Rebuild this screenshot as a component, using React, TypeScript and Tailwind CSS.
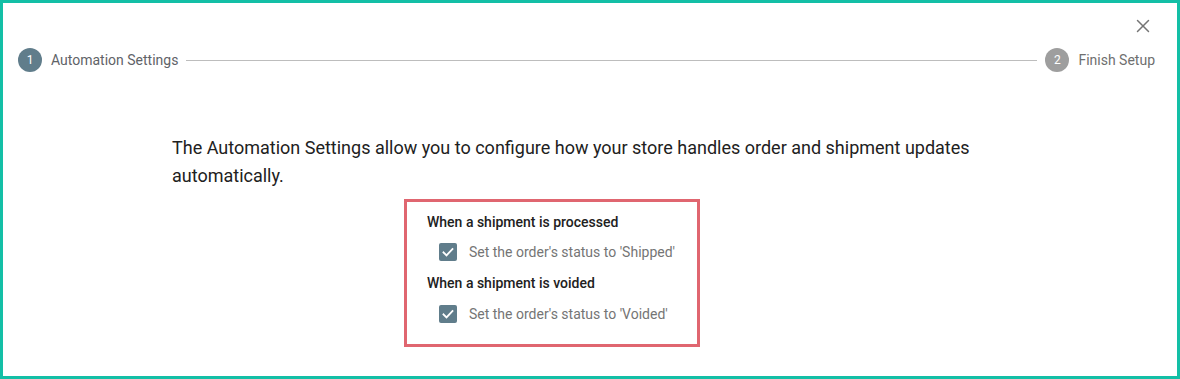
import { X } from "lucide-react";

function Check() {
  return (
    <span className="flex h-[18px] w-[18px] shrink-0 items-center justify-center rounded-[2px] bg-[#607d8b]">
      <svg viewBox="0 0 24 24" className="h-[18px] w-[18px]" fill="none">
        <path d="M6 12.5l4 4 8-8.5" stroke="#fff" strokeWidth="2.4" strokeLinecap="square" />
      </svg>
    </span>
  );
}

function Step({ n, label, active }: { n: number; label: string; active?: boolean }) {
  return (
    <div className="flex shrink-0 items-center gap-[9px]">
      <span
        className={`flex h-6 w-6 items-center justify-center rounded-full text-[12px] text-white ${
          active ? "bg-[#607d8b]" : "bg-[#9e9e9e]"
        }`}
      >
        {n}
      </span>
      <span className={`text-[14px] ${active ? "text-[#5f6368]" : "text-[#6f6f6f]"}`}>{label}</span>
    </div>
  );
}

export default function App() {
  return (
    <div
      className="relative h-[379px] w-full border-[3px] border-[#13bfa6] bg-white"
      style={{ fontFamily: "Roboto, 'Liberation Sans', sans-serif" }}
    >
      <button className="absolute right-[22px] top-[11px] flex h-6 w-6 items-center justify-center text-[#757575]">
        <X className="h-[22px] w-[22px]" strokeWidth={1.6} />
      </button>

      {/* Stepper */}
      <div className="flex items-center pl-[15px] pr-[22px] pt-[45px]">
        <Step n={1} label="Automation Settings" active />
        <div className="mx-2 h-px flex-1 bg-[#bdbdbd]" />
        <Step n={2} label="Finish Setup" />
      </div>

      <div className="mx-auto mt-[62px] w-[836px]">
        <p className="text-[18px] leading-7 text-[#212121]">
          The Automation Settings allow you to configure how your store handles order and shipment updates
          automatically.
        </p>

        <div className="ml-[232px] mt-[9px] w-[296px] border-[3px] border-[#e06670] pb-[18px] pl-5 pt-[10px] text-[14px]">
          <div className="h-5 font-medium leading-5 text-[#212121]">When a shipment is processed</div>
          <div className="mt-2 flex h-6 items-center gap-3 pl-3">
            <Check />
            <span className="text-[#757575]">Set the order's status to 'Shipped'</span>
          </div>
          <div className="mt-[9px] h-5 font-medium leading-5 text-[#212121]">When a shipment is voided</div>
          <div className="mt-[9px] flex h-6 items-center gap-3 pl-3">
            <Check />
            <span className="text-[#757575]">Set the order's status to 'Voided'</span>
          </div>
        </div>
      </div>
    </div>
  );
}
